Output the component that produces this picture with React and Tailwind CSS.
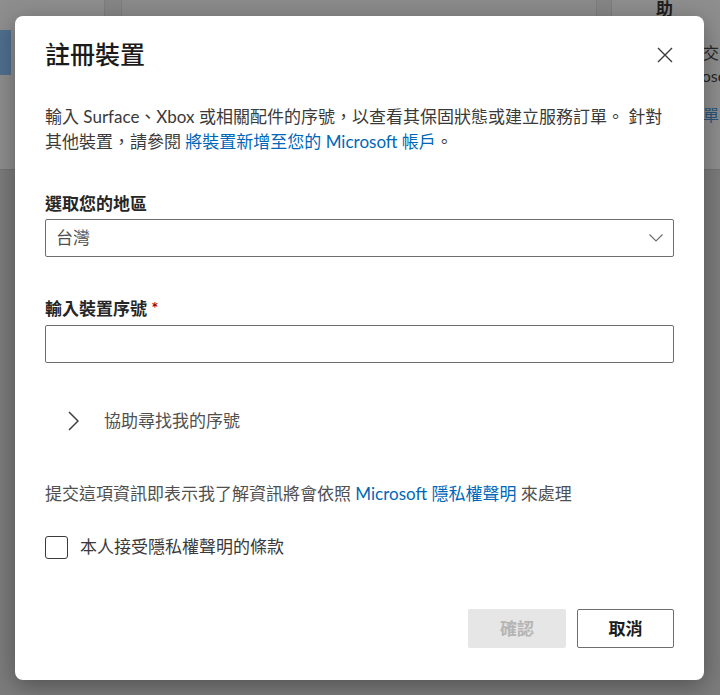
import { useState } from "react";

const font = "font-['Segoe_UI','Lato','Noto_Sans_CJK_TC',sans-serif]";

function CloseIcon() {
  return (
    <svg width="16" height="16" viewBox="0 0 16 16" fill="none" stroke="#3b3b3b" strokeWidth="1.4">
      <path d="M1 1 L15 15 M15 1 L1 15" />
    </svg>
  );
}

function ChevronDown() {
  return (
    <svg width="14" height="8" viewBox="0 0 14 8" fill="none" stroke="#6b6b6b" strokeWidth="1.1">
      <path d="M0.5 0.5 L7 7 L13.5 0.5" />
    </svg>
  );
}

function ChevronRight() {
  return (
    <svg width="11" height="20" viewBox="0 0 11 20" fill="none" stroke="#3f3f3f" strokeWidth="1.5">
      <path d="M1 1 L10 10 L1 19" />
    </svg>
  );
}

export default function App() {
  const [serial, setSerial] = useState("");
  const [agreed, setAgreed] = useState(false);

  return (
    <div className={`relative h-[695px] w-[720px] overflow-hidden bg-[#7c7c7c] ${font}`}>

      {/* Page behind the dimmed backdrop */}
      <div className="flex h-[170px] border-b border-[#747474] bg-[#8a8a8a]">
        <div className="flex w-[105px] flex-col border-r border-[#7e7e7e] bg-[#8e8e8e]">
          <div className="mt-[30px] h-[45px] w-[11px] bg-[#4f6f8f]" />
        </div>
        <div className="w-[17px] border-r border-[#7e7e7e] bg-[#868686]" />
        <div className="w-[475px] border-r border-[#7e7e7e] bg-[#8b8b8b]" />
        <div className="w-[15px] border-r border-[#7e7e7e] bg-[#868686]" />
        <div className="flex flex-1 flex-col overflow-hidden bg-[#8e8e8e] pl-[44px] whitespace-nowrap">
          <div className="mt-[-3px] text-[17px] font-bold leading-[24px] text-[#1e1e1e]">助</div>
          <div className="mt-[20px] pl-[31px] text-[16px] leading-[23px] text-[#262626]">提交</div>
          <div className="pl-[14px] text-[16px] leading-[23px] text-[#262626]">Microsoft</div>
          <div className="mt-[16px] pl-[31px] text-[16px] leading-[23px] text-[#2b5479]">訂單</div>
        </div>
      </div>

      {/* Dialog */}
      <div className="absolute left-[15px] top-[16px] flex w-[689px] flex-col rounded-lg bg-white px-[30px] pb-[32px] pt-[22px] shadow-[0_6px_24px_rgba(0,0,0,0.35)]">
        <div className="flex h-[32px] items-center justify-between">
          <h2 className="text-[25px] font-medium leading-[32px] text-[#1b1b1b]">註冊裝置</h2>
          <button className="mr-[1px] mt-[2px] flex h-[16px] w-[16px] items-center justify-center">
            <CloseIcon />
          </button>
        </div>

        <p className="mt-[34px] text-[17px] leading-[25px] text-[#3a3a3a]">
          輸入 Surface、Xbox 或相關配件的序號，以查看其保固狀態或建立服務訂單。 針對
          <br />
          其他裝置，請參閱 <a className="text-[#0067b8]">將裝置新增至您的 Microsoft 帳戶</a>。
        </p>

        <label className="mt-[38px] text-[17px] font-semibold leading-[24px] text-[#262626]">選取您的地區</label>
        <div className="mt-[3px] flex h-[38px] items-center justify-between rounded-[2px] border border-[#6e6e6e] pl-[10px] pr-[10px]">
          <span className="text-[17px] text-[#505050]">台灣</span>
          <ChevronDown />
        </div>

        <label className="mt-[40px] text-[17px] font-semibold leading-[24px] text-[#262626]">
          輸入裝置序號 <span className="text-[#a80000]">*</span>
        </label>
        <input
          value={serial}
          onChange={e => setSerial(e.target.value)}
          className="mt-[4px] h-[38px] rounded-[2px] border border-[#6e6e6e] px-[10px] text-[17px] outline-none"
        />

        <div className="mt-[46px] flex h-[24px] items-center pl-[23px]">
          <ChevronRight />
          <span className="ml-[25px] text-[17px] text-[#505050]">協助尋找我的序號</span>
        </div>

        <p className="mt-[49px] text-[17px] leading-[24px] text-[#505050]">
          提交這項資訊即表示我了解資訊將會依照 <a className="text-[#0067b8]">Microsoft 隱私權聲明</a> 來處理
        </p>

        <label className="mt-[29px] flex h-[24px] cursor-pointer items-center">
          <span
            onClick={() => setAgreed(!agreed)}
            className="h-[23px] w-[23px] rounded-[3px] border-[1.5px] border-[#3a3a3a] bg-white"
          />
          <span className="ml-[12px] text-[17px] text-[#3a3a3a]">本人接受隱私權聲明的條款</span>
        </label>

        <div className="mt-[50px] flex justify-end gap-[11px]">
          <button className="h-[39px] w-[98px] rounded-[2px] bg-[#e6e6e6] text-[17px] font-semibold text-[#b5b5b5]">確認</button>
          <button className="h-[39px] w-[97px] rounded-[2px] border border-[#6e6e6e] bg-white text-[17px] font-semibold text-[#1b1b1b]">取消</button>
        </div>
      </div>
    </div>
  );
}
